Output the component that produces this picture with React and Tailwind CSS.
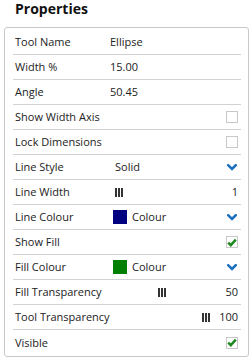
import React from "react";

const Chevron = () => (
  <svg width="10" height="7" viewBox="0 0 10 7" className="block">
    <polyline points="1.3,1.3 5,5 8.7,1.3" fill="none" stroke="#1a6fbf" strokeWidth="2.6" strokeLinecap="square" />
  </svg>
);

const Check = ({ checked }) => (
  <div className="w-[12px] h-[12px] border border-[#c8c8c8] bg-white flex items-center justify-center">
    {checked && (
      <svg width="10" height="9" viewBox="0 0 10 9" className="block">
        <polyline points="1.2,4.6 3.8,7.2 8.8,1.6" fill="none" stroke="#1f8a1f" strokeWidth="2.5" />
      </svg>
    )}
  </div>
);

const Slider = () => (
  <div className="flex gap-[1px] h-[9px]">
    <div className="w-[2px] h-full bg-[#333]" />
    <div className="w-[2px] h-full bg-[#333]" />
    <div className="w-[2px] h-full bg-[#333]" />
  </div>
);

const Row = ({ label, children, last }) => (
  <div className={"flex items-center h-[25px] pl-[2px] pr-[3px] " + (last ? "" : "border-b border-[#d2d2d2]")}>
    <div className="w-[95px] shrink-0 whitespace-nowrap">{label}</div>
    <div className="flex-1 flex items-center min-w-0">{children}</div>
  </div>
);

export default function App() {
  return (
    <div className="w-[251px] h-[360px] bg-white text-[#222]" style={{ fontFamily: '"Open Sans", sans-serif' }}>
      <div className="pl-[15px] text-[14px] leading-[18px] font-bold text-[#111] h-[27px]">Properties</div>
      <div className="ml-[4px] w-[245px] border border-[#c8c8c8] rounded-[3px] px-[8px] pr-[7px] pt-[2px] pb-[1px] text-[11px] leading-[14px]">
        <Row label="Tool Name"><span>Ellipse</span></Row>
        <Row label="Width %"><span>15.00</span></Row>
        <Row label="Angle"><span>50.45</span></Row>
        <Row label="Show Width Axis"><div className="flex-1" /><Check /></Row>
        <Row label="Lock Dimensions"><div className="flex-1" /><Check /></Row>
        <Row label="Line Style">
          <span className="pl-[5px]">Solid</span>
          <div className="flex-1" />
          <div className="pr-[1px]"><Chevron /></div>
        </Row>
        <Row label="Line Width">
          <div className="pl-[5px]"><Slider /></div>
          <div className="flex-1 text-right">1</div>
        </Row>
        <Row label="Line Colour">
          <div className="ml-[3px] w-[14px] h-[14px] bg-[#000080]" />
          <span className="ml-[5px]">Colour</span>
          <div className="flex-1" />
          <div className="pr-[1px]"><Chevron /></div>
        </Row>
        <Row label="Show Fill"><div className="flex-1" /><Check checked /></Row>
        <Row label="Fill Colour">
          <div className="ml-[3px] w-[14px] h-[14px] bg-[#008000]" />
          <span className="ml-[5px]">Colour</span>
          <div className="flex-1" />
          <div className="pr-[1px]"><Chevron /></div>
        </Row>
        <Row label="Fill Transparency">
          <div className="pl-[48px]"><Slider /></div>
          <div className="flex-1 text-right">50</div>
        </Row>
        <Row label="Tool Transparency">
          <div className="pl-[92px]"><Slider /></div>
          <div className="flex-1 text-right">100</div>
        </Row>
        <Row label="Visible" last><div className="flex-1" /><Check checked /></Row>
      </div>
    </div>
  );
}
